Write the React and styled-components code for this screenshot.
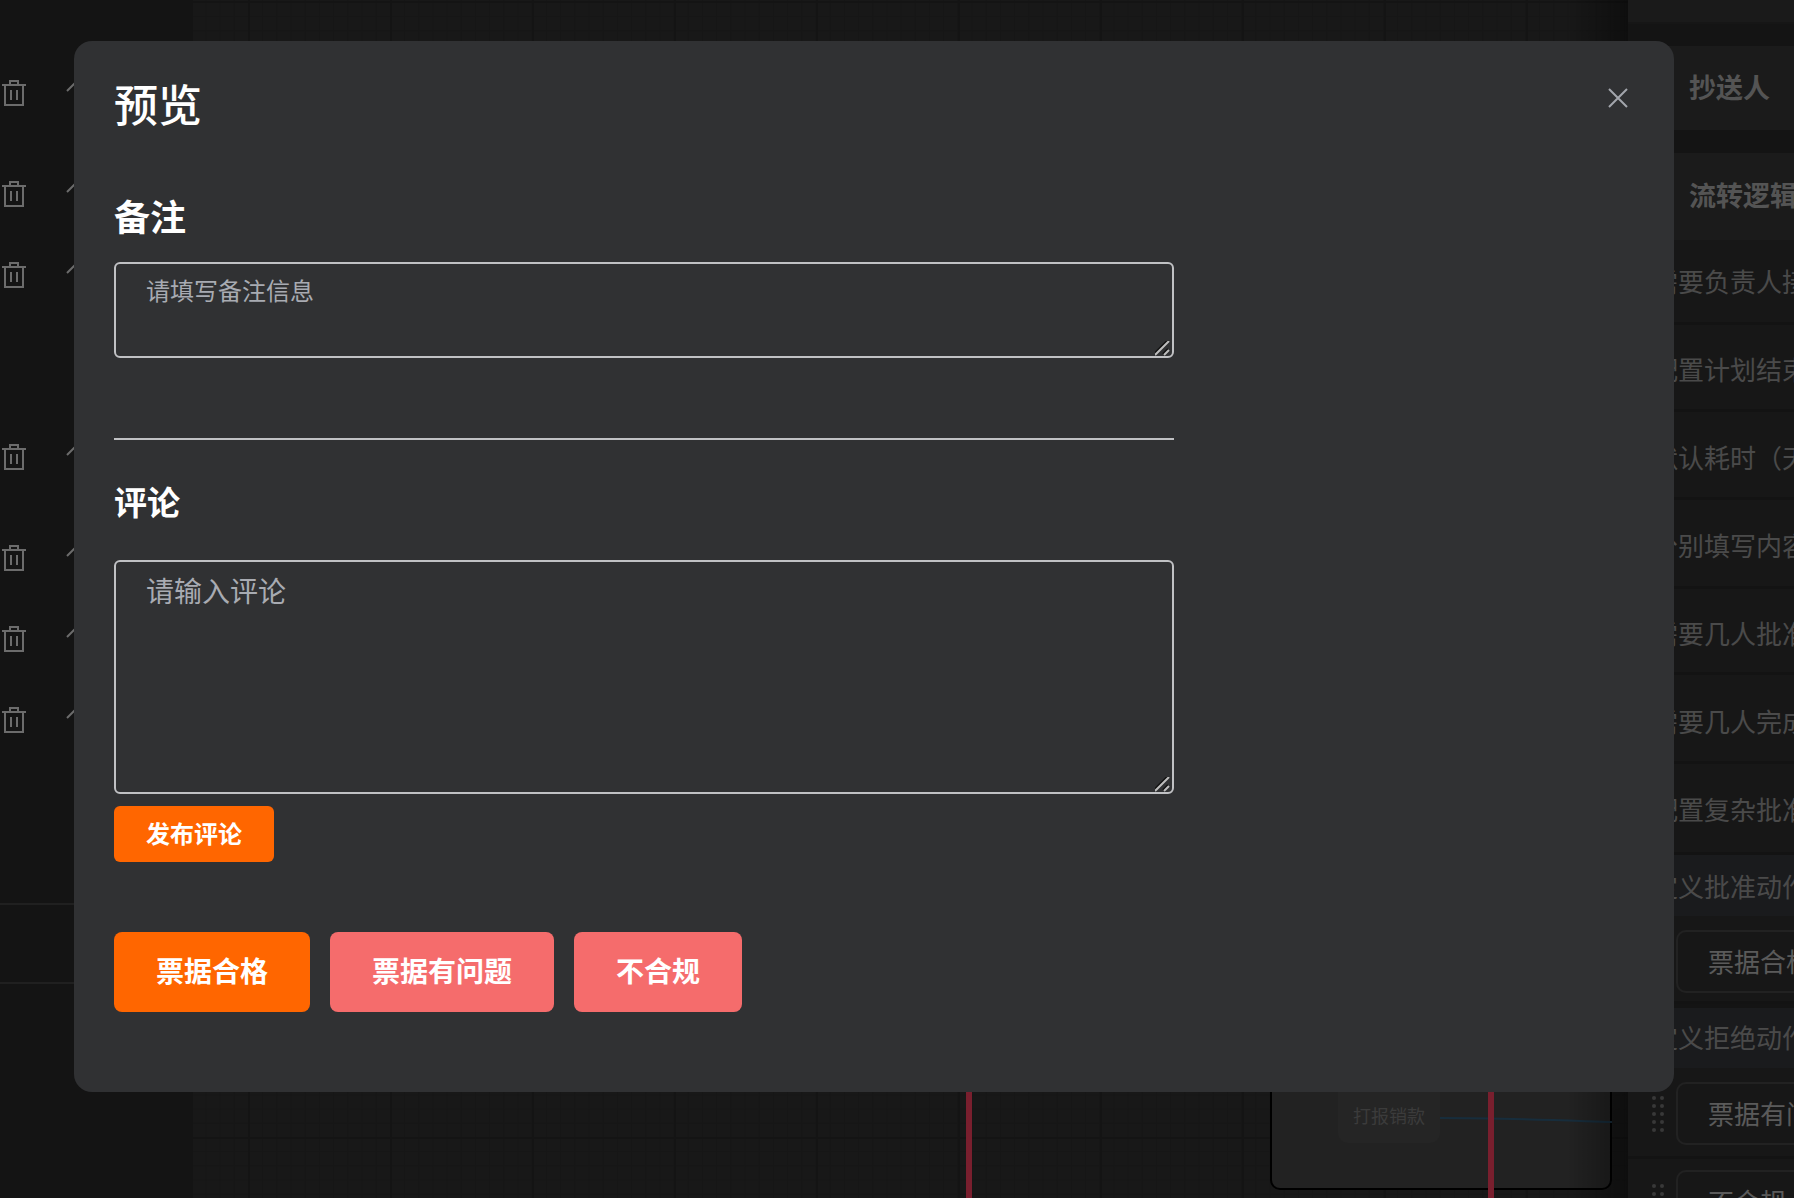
import React from 'react'
import styled, { createGlobalStyle } from 'styled-components'

const GlobalStyle = createGlobalStyle`
  html, body {
    margin: 0;
    height: 100%;
    background: #282828;
    overflow: hidden;
    font-family: "Noto Sans CJK SC", "Noto Sans", sans-serif;
  }
  * { box-sizing: border-box; }
`

const Shell = styled.div`
  display: flex;
  height: 100vh;
  position: relative;
  overflow: hidden;
`

const LeftPanel = styled.aside`
  width: 193px;
  flex-shrink: 0;
  padding-top: 80px;
  background: #282828;
`

const NodeRow = styled.div`
  display: flex;
  align-items: flex-start;
  height: ${p => p.$h}px;
  padding-left: 2px;
  gap: 40px;
`

const Rule = styled.div`
  height: ${p => p.$h}px;
  border-top: 2px solid #404040;
`

const TrashSvg = styled.svg`
  width: 24px;
  height: 26px;
  fill: none;
  stroke: #d8d8d8;
  stroke-width: 2;
`

const Canvas = styled.main`
  flex: 1;
  position: relative;
  overflow: hidden;
  background-color: #303030;
  background-image:
    linear-gradient(to right, #282828 2px, transparent 2px),
    linear-gradient(to bottom, #282828 2px, transparent 2px),
    linear-gradient(to right, #2c2c2c 1px, transparent 1px),
    linear-gradient(to bottom, #2c2c2c 1px, transparent 1px);
  background-size: 142px 142px, 142px 142px, 14.2px 14.2px, 14.2px 14.2px;
  background-position: 55px 1137px, 55px 1137px, 55px 1137px, 55px 1137px;

  &::after {
    content: '';
    position: absolute;
    top: 0;
    bottom: 0;
    right: 0;
    width: 60px;
    background: linear-gradient(to right, transparent, rgba(0, 0, 0, 0.4));
  }
`

const Card = styled.div`
  position: absolute;
  left: 1077px;
  top: 700px;
  width: 342px;
  height: 490px;
  background: #444;
  border: 2px solid #000;
  border-radius: 10px;
`

const FlowNode = styled.div`
  position: absolute;
  left: 1145px;
  top: 1040px;
  width: 102px;
  height: 103px;
  display: flex;
  align-items: flex-end;
  justify-content: center;
  padding-bottom: 15px;
  background: #4a4a4a;
  border-radius: 10px;
  color: #777;
  font-size: 18px;
  line-height: 26px;
`

const Wire = styled.svg`
  position: absolute;
  left: 1247px;
  top: 1110px;
  width: 172px;
  height: 20px;
  fill: none;
`

const RedLine = styled.div`
  position: absolute;
  left: ${p => p.$x}px;
  top: 700px;
  bottom: 0;
  width: 6px;
  background: #f23f5d;
`

const RightPanel = styled.aside`
  width: 166px;
  flex-shrink: 0;
  overflow: hidden;
  background: #282828;
`

const TopStrip = styled.div`
  height: 24px;
  background: #343434;
  border-bottom: 2px solid #2c2c2c;
  margin-bottom: 22px;
`

const Section = styled.div`
  height: ${p => p.$h}px;
  margin-bottom: ${p => p.$mb || 0}px;
  display: flex;
  align-items: center;
  padding: 0 0 4px 61px;
  background: #363636;
  color: #a8a8a8;
  font-size: 27px;
  font-weight: 700;
  white-space: nowrap;
`

const Field = styled.div`
  height: ${p => p.$h}px;
  padding: ${p => p.$pt}px 0 0 24px;
  background: #2f2f2f;
  border-bottom: 3px solid #262626;
  color: #949494;
  font-size: 26px;
  line-height: 36px;
  white-space: nowrap;
`

const ActionTitle = styled(Field)`
  margin-top: ${p => p.$mt || 0}px;
  background: #34363a;
  border-bottom: 0;
`

const ActionRow = styled.div`
  height: ${p => p.$h}px;
  display: flex;
  align-items: flex-start;
  gap: 12px;
  padding: ${p => p.$pt}px 0 0 24px;
  background: #2f2f2f;
  border-bottom: 3px solid #262626;
`

const Handle = styled.svg`
  width: 12px;
  height: 40px;
  margin-top: 14px;
  flex-shrink: 0;
  fill: #707070;
`

const ActionChip = styled.div`
  width: 240px;
  height: 63px;
  flex-shrink: 0;
  display: flex;
  align-items: center;
  padding: 0 0 3px 30px;
  border: 2px solid #444;
  border-radius: 10px;
  color: #b4b4b4;
  font-size: 26px;
  white-space: nowrap;
`

const Overlay = styled.div`
  position: absolute;
  inset: 0;
  padding: 41px 120px 0 74px;
  background: rgba(0, 0, 0, 0.5);
`

const Modal = styled.section`
  width: 1600px;
  height: 1051px;
  padding: 32px 46px 0 40px;
  border-radius: 18px;
  background: #303133;
`

const Header = styled.header`
  display: flex;
  justify-content: space-between;
  align-items: flex-start;
`

const Title = styled.h2`
  margin: 0;
  color: #fff;
  font-size: 44px;
  font-weight: 500;
  line-height: 60px;
`

const CloseButton = styled.button`
  width: 20px;
  height: 20px;
  margin-top: 15px;
  padding: 0;
  border: 0;
  background: none;
  color: #a3a6ad;
  display: flex;
`

const Form = styled.div`
  width: 1060px;
`

const SectionTitle = styled.h3`
  margin: ${p => p.$mt}px 0 ${p => p.$mb}px;
  color: #fff;
  font-size: ${p => p.$size}px;
  font-weight: 700;
  line-height: ${p => p.$lh}px;
`

const InputWrap = styled.div`
  position: relative;
`

const Input = styled.textarea`
  display: block;
  width: 100%;
  height: ${p => p.$h}px;
  padding: ${p => p.$pt}px 30px;
  background: transparent;
  border: 2px solid #c0c1c4;
  border-radius: 6px;
  color: #fff;
  font-family: inherit;
  font-size: ${p => p.$size}px;
  line-height: 1.4;
  outline: none;
  resize: none;

  &::placeholder {
    color: #a8abb2;
    opacity: 1;
  }
`

const Grip = styled.svg`
  position: absolute;
  right: 3px;
  bottom: 1px;
  width: 16px;
  height: 16px;
  fill: none;
  pointer-events: none;
`

const Divider = styled.hr`
  margin: 80px 0 0;
  height: 2px;
  border: 0;
  background: #c0c1c4;
`

const PostButton = styled.button`
  display: block;
  width: 160px;
  height: 56px;
  margin-top: 12px;
  padding: 0 0 4px;
  border: 0;
  border-radius: 6px;
  background: #ff6600;
  color: #fff;
  font-family: inherit;
  font-size: 24px;
  font-weight: 700;
`

const Actions = styled.div`
  display: flex;
  gap: 20px;
  margin-top: 70px;
`

const ActionButton = styled.button`
  height: 80px;
  padding: 0 42px 4px;
  border: 0;
  border-radius: 8px;
  background: ${p => (p.$danger ? '#f56c6c' : '#ff6600')};
  color: #fff;
  font-family: inherit;
  font-size: 28px;
  font-weight: 700;
`

const Trash = () => (
  <TrashSvg viewBox="0 0 24 26">
    <path d="M0 5h24M8 5V1h8v4M3 5v20h18V5M9 10v10M15 10v10" />
  </TrashSvg>
)

const Pencil = () => (
  <svg width="24" height="24" viewBox="0 0 24 24" fill="none" stroke="#d8d8d8" strokeWidth="2">
    <path d="M1 11 12 0" />
  </svg>
)

const DragDots = () => (
  <Handle viewBox="0 0 12 40">
    {[0, 8, 16, 24, 32].map(y => (
      <g key={y}>
        <rect x="0" y={y} width="4" height="4" rx="2" />
        <rect x="8" y={y} width="4" height="4" rx="2" />
      </g>
    ))}
  </Handle>
)

const ResizeGrip = () => (
  <Grip viewBox="0 0 16 16">
    <path d="M0 14 14 0M9 14l5-5" stroke="#111" strokeWidth="2" transform="translate(-1 -1)" />
    <path d="M0 14 14 0M9 14l5-5" stroke="#bdbdbd" strokeWidth="2" />
  </Grip>
)

const nodeRows = [101, 81, 182, 101, 81, 81, 196]

const fields = [
  ['需要负责人接收', 85, 23],
  ['配置计划结束时间', 87, 26],
  ['默认耗时（天）', 88, 27],
  ['分别填写内容', 89, 27],
  ['需要几人批准', 86, 26],
  ['需要几人完成', 89, 28],
  ['配置复杂批准', 91, 27],
]

const App = () => (
  <Shell>
    <GlobalStyle />
    <LeftPanel>
      {nodeRows.map((h, i) => (
        <NodeRow key={i} $h={h}>
          <Trash />
          <Pencil />
        </NodeRow>
      ))}
      <Rule $h={79} />
      <Rule $h={200} />
    </LeftPanel>
    <Canvas>
      <Card />
      <FlowNode>打报销款</FlowNode>
      <Wire viewBox="0 0 172 20">
        <path d="M0 8 C60 8 110 10 172 12" stroke="#2f5a78" strokeWidth="2" />
      </Wire>
      <RedLine $x={773} />
      <RedLine $x={1295} />
    </Canvas>
    <RightPanel>
      <TopStrip />
      <Section $h={84} $mb={23}>抄送人</Section>
      <Section $h={87}>流转逻辑</Section>
      {fields.map(([label, h, pt]) => (
        <Field key={label} $h={h} $pt={pt}>{label}</Field>
      ))}
      <ActionTitle $h={61} $pt={13}>定义批准动作</ActionTitle>
      <ActionRow $h={88} $pt={14}>
        <DragDots />
        <ActionChip>票据合格</ActionChip>
      </ActionRow>
      <ActionTitle $h={60} $pt={11} $mt={4}>定义拒绝动作</ActionTitle>
      <ActionRow $h={91} $pt={14}>
        <DragDots />
        <ActionChip>票据有问题</ActionChip>
      </ActionRow>
      <ActionRow $h={91} $pt={11}>
        <DragDots />
        <ActionChip>不合规</ActionChip>
      </ActionRow>
    </RightPanel>
    <Overlay>
      <Modal>
        <Header>
          <Title>预览</Title>
          <CloseButton aria-label="关闭">
            <svg width="20" height="20" viewBox="0 0 20 20" fill="none" stroke="currentColor" strokeWidth="2">
              <path d="M1 1l18 18M19 1 1 19" />
            </svg>
          </CloseButton>
        </Header>
        <Form>
          <SectionTitle $size={36} $lh={50} $mt={57} $mb={22}>备注</SectionTitle>
          <InputWrap>
            <Input $h={96} $size={24} $pt={9} placeholder="请填写备注信息" />
            <ResizeGrip />
          </InputWrap>
          <Divider />
          <SectionTitle $size={33} $lh={44} $mt={39} $mb={37}>评论</SectionTitle>
          <InputWrap>
            <Input $h={234} $size={28} $pt={9} placeholder="请输入评论" />
            <ResizeGrip />
          </InputWrap>
          <PostButton>发布评论</PostButton>
          <Actions>
            <ActionButton>票据合格</ActionButton>
            <ActionButton $danger>票据有问题</ActionButton>
            <ActionButton $danger>不合规</ActionButton>
          </Actions>
        </Form>
      </Modal>
    </Overlay>
  </Shell>
)

export default App
